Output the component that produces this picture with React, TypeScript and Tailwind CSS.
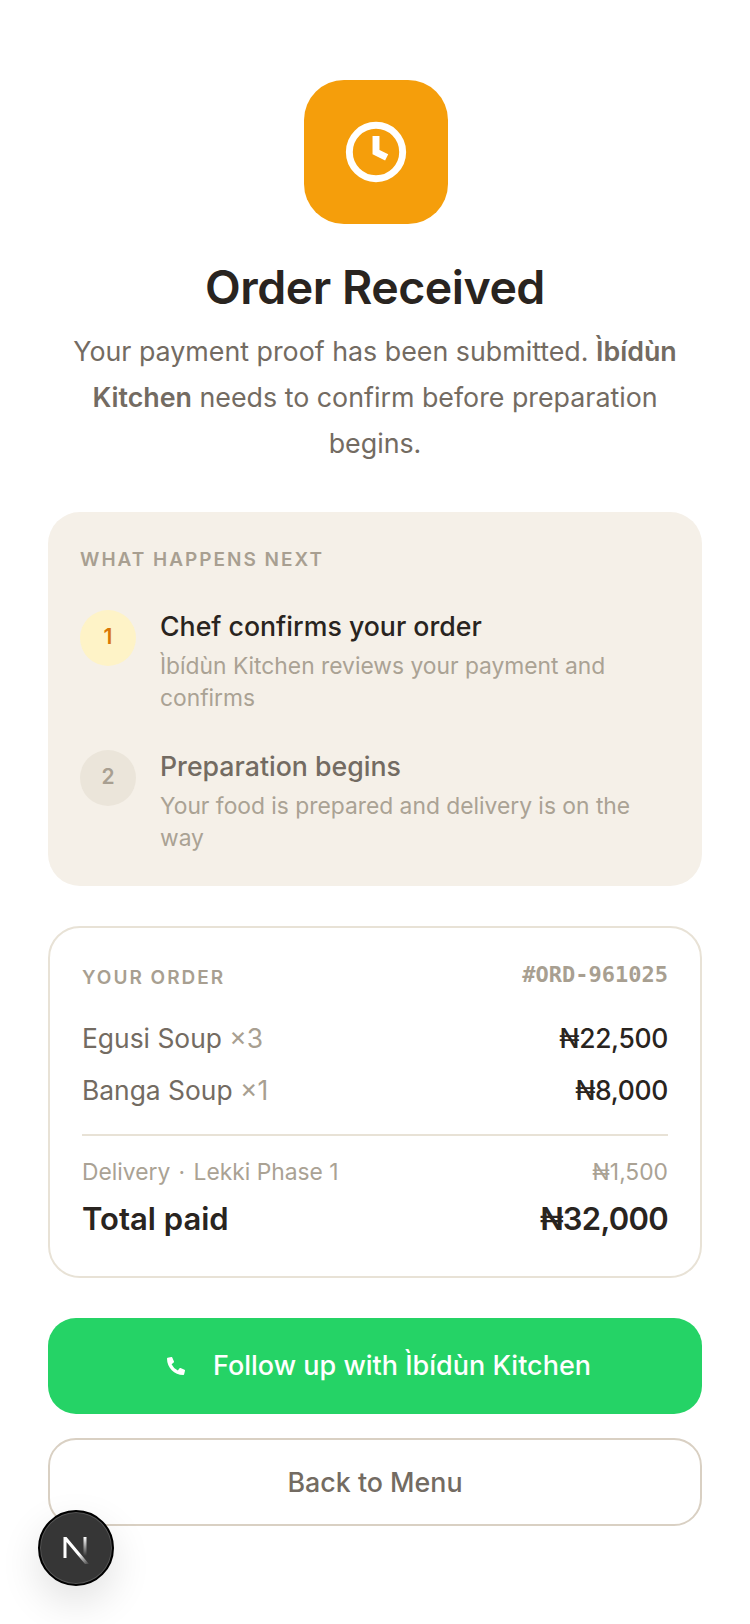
import React from 'react';
import { FaPhoneAlt } from 'react-icons/fa';

const steps = [
  { n: '1', title: 'Chef confirms your order', desc: 'Ìbídùn Kitchen reviews your payment and confirms', active: true },
  { n: '2', title: 'Preparation begins', desc: 'Your food is prepared and delivery is on the way', active: false },
];

const items = [
  { name: 'Egusi Soup', qty: '×3', price: '₦22,500' },
  { name: 'Banga Soup', qty: '×1', price: '₦8,000' },
];

export default function App() {
  return (
    <div className="relative h-[1624px] overflow-hidden bg-white px-12 pt-20 font-['Inter',sans-serif] text-[#292524]">
      <div className="flex flex-col items-center text-center">
        <div className="ml-[2px] flex h-36 w-36 items-center justify-center rounded-[40px] bg-[#f59e0b]">
          <svg width="64" height="64" viewBox="0 0 24 24" fill="none" stroke="#fff" strokeWidth="2.6">
            <circle cx="12" cy="12" r="10" />
            <path d="M12 6v6l4 2" />
          </svg>
        </div>
        <h1 className="mt-[35px] text-[46.5px] leading-[56px] font-semibold tracking-[-0.5px] text-[#292420]">Order Received</h1>
        <p className="mt-[13px] text-[26.8px] leading-[46px] text-[#736b62]">
          Your payment proof has been submitted. <strong className="font-semibold">Ìbídùn Kitchen</strong> needs to confirm before preparation begins.
        </p>
      </div>

      <section className="mt-[46px] rounded-[32px] bg-[#f5f0e8] px-8 pt-[34px] pb-8">
        <h2 className="text-[19px] leading-7 font-semibold tracking-[2px] text-[#a89f91]">WHAT HAPPENS NEXT</h2>
        <div className="mt-9 flex flex-col gap-9">
          {steps.map((s) => (
            <div key={s.n} className="flex gap-6">
              <div className={`flex h-14 w-14 shrink-0 items-center justify-center rounded-full pb-[2px] text-[21px] font-semibold ${s.active ? 'bg-[#fef3c7] text-[#d97706]' : 'bg-[#ebe5da] text-[#a89f91]'}`}>
                {s.n}
              </div>
              <div>
                <div className={`-mt-px text-[26.7px] leading-[34px] font-medium ${s.active ? 'text-[#292420]' : 'text-[#736b62]'}`}>{s.title}</div>
                <div className="mt-[7px] text-[22.8px] leading-8 text-[#aaa294]">{s.desc}</div>
              </div>
            </div>
          ))}
        </div>
      </section>

      <section className="mt-10 rounded-[32px] border-2 border-[#e8e2d6] bg-white px-8 pt-8 pb-[37px]">
        <div className="flex h-[33px] items-center justify-between">
          <span className="mt-[2px] text-[19px] leading-7 font-semibold tracking-[2px] text-[#a89f91]">YOUR ORDER</span>
          <span className="-mt-1 font-['DejaVu_Sans_Mono',monospace] text-[22px] font-bold text-[#a89f91]">#ORD-961025</span>
        </div>
        <div className="mt-[27px] flex flex-col gap-4">
          {items.map((it) => (
            <div key={it.name} className="flex items-center justify-between text-[26.4px] leading-9">
              <span className="text-[#736b62]">{it.name} <span className="text-[#a89f91]">{it.qty}</span></span>
              <span className="font-medium tracking-[-0.3px] text-[#292420]">{it.price}</span>
            </div>
          ))}
        </div>
        <div className="mt-[26px] h-0.5 bg-[#e8e2d6]" />
        <div className="mt-5 flex items-center justify-between text-[22.8px] leading-8 text-[#aaa294]">
          <span>Delivery <span className="mx-[2px]">·</span> Lekki Phase 1</span>
          <span>₦1,500</span>
        </div>
        <div className="mt-[11px] flex items-center justify-between text-[31px] leading-10 font-semibold text-[#292420]">
          <span>Total paid</span>
          <span className="tracking-[-0.7px]">₦32,000</span>
        </div>
      </section>

      <button className="mt-10 flex h-24 w-full items-center justify-center gap-[28px] rounded-[28px] bg-[#25d366] pl-2 text-[27px] font-medium text-white">
        <FaPhoneAlt className="h-[18px] w-[18px]" />
        Follow up with Ìbídùn Kitchen
      </button>
      <button className="mt-6 flex h-[88px] w-full items-center justify-center rounded-[28px] border-2 border-[#d9d0c3] bg-white text-[26.8px] font-medium text-[#736b62]">
        Back to Menu
      </button>

      <div className="absolute top-[1510px] left-[38px] flex h-[76px] w-[76px] items-center justify-center rounded-full border-2 border-black bg-[#363636] shadow-[0_0_0_1px_#555_inset,0_16px_40px_rgba(0,0,0,0.12)]">
        <svg width="40" height="40" viewBox="0 0 40 40" fill="none">
          <defs>
            <linearGradient id="nDiag" x1="12" y1="12" x2="33" y2="37" gradientUnits="userSpaceOnUse">
              <stop offset="0.55" stopColor="#fff" />
              <stop offset="1" stopColor="#fff" stopOpacity="0" />
            </linearGradient>
            <linearGradient id="nBar" x1="29" y1="9" x2="29" y2="28" gradientUnits="userSpaceOnUse">
              <stop stopColor="#fff" />
              <stop offset="1" stopColor="#fff" stopOpacity="0" />
            </linearGradient>
          </defs>
          <path d="M7.5 30V9h3L33 36h-4L10.5 14v16z" fill="url(#nDiag)" />
          <rect x="27.5" y="9" width="3" height="19" fill="url(#nBar)" />
        </svg>
      </div>
    </div>
  );
}
